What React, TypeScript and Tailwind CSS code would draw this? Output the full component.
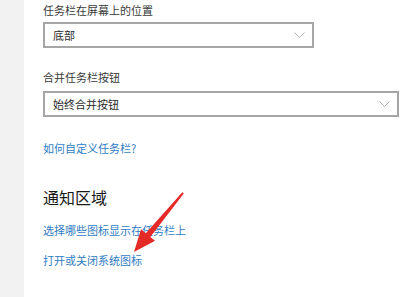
import React from "react";

function Chevron(): JSX.Element {
  return (
    <svg width="11" height="6" viewBox="0 0 11 6" fill="none" stroke="#b4b4b4" strokeWidth={1}>
      <path d="M0.5 0.5l5 5 5-5" />
    </svg>
  );
}

function Select({ value, width }: { value: string; width: string }): JSX.Element {
  return (
    <div
      className={`flex items-center justify-between h-[26px] border-2 border-[#a6a6a6] bg-white pl-[8px] pr-[7px] text-[11px] text-[#2a2a2a] ${width}`}
    >
      <span>{value}</span>
      <Chevron />
    </div>
  );
}

export default function App(): JSX.Element {
  return (
    <div
      className="relative flex w-[406px] h-[297px] bg-white overflow-hidden"
      style={{ fontFamily: '"Noto Sans CJK SC", "Noto Sans", sans-serif' }}
    >
      {/* Left nav strip */}
      <div className="w-[24px] shrink-0 bg-[#f2f2f2]" />

      {/* Settings content */}
      <div className="flex flex-col pl-[19px] pt-[2px] text-[11px] leading-[16px]">
        <div className="text-[#3a3a3a]">任务栏在屏幕上的位置</div>
        <div className="mt-[4px]">
          <Select value="底部" width="w-[271px]" />
        </div>

        <div className="mt-[21px] text-[#3a3a3a]">合并任务栏按钮</div>
        <div className="mt-[6px]">
          <Select value="始终合并按钮" width="w-[356px]" />
        </div>

        <div className="mt-[23px] text-[#2f7cc2]">如何自定义任务栏?</div>

        <div className="mt-[30px] text-[16px] leading-[22px] text-[#1a1a1a]">通知区域</div>

        <div className="mt-[14px] text-[#2f7cc2]">选择哪些图标显示在任务栏上</div>
        <div className="mt-[14px] text-[#2f7cc2]">打开或关闭系统图标</div>
      </div>

      {/* Red annotation arrow */}
      <svg className="absolute left-0 top-0" width="406" height="297" viewBox="0 0 406 297">
        <polygon
          points="182.3,192.2 145.8,233.2 141,229.2 134,252 155,240.8 150.3,236.9 183.8,193.5"
          fill="#e42a26"
        />
      </svg>
    </div>
  );
}
